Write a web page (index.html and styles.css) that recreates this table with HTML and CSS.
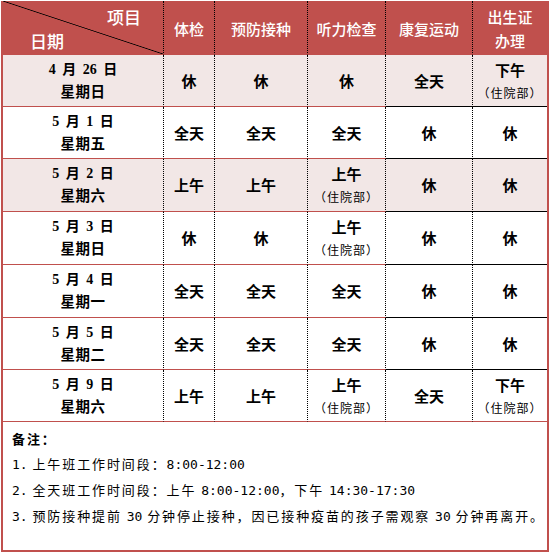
FILE: index.html
```html
<!DOCTYPE html>
<html lang="zh-CN">
<head>
<meta charset="utf-8">
<title>门诊安排</title>
<link rel="stylesheet" href="styles.css">
</head>
<body>
<div class="sheet">
  <div class="grid">
    <div class="cell head corner"><span class="c-top">项目</span><span class="c-bot">日期</span></div>
    <div class="cell head">体检</div>
    <div class="cell head">预防接种</div>
    <div class="cell head">听力检查</div>
    <div class="cell head">康复运动</div>
    <div class="cell head last"><span>出生证</span><span>办理</span></div>

    <div class="cell date pink"><span>4 月 26 日</span><span>星期日</span></div>
    <div class="cell pink">休</div>
    <div class="cell pink">休</div>
    <div class="cell pink">休</div>
    <div class="cell pink dark">全天</div>
    <div class="cell pink dark last"><span>下午</span><span class="sub">（住院部）</span></div>

    <div class="cell date"><span>5 月 1 日</span><span>星期五</span></div>
    <div class="cell">全天</div>
    <div class="cell">全天</div>
    <div class="cell">全天</div>
    <div class="cell dark">休</div>
    <div class="cell dark last">休</div>

    <div class="cell date pink"><span>5 月 2 日</span><span>星期六</span></div>
    <div class="cell pink">上午</div>
    <div class="cell pink">上午</div>
    <div class="cell pink"><span>上午</span><span class="sub">（住院部）</span></div>
    <div class="cell pink dark">休</div>
    <div class="cell pink dark last">休</div>

    <div class="cell date"><span>5 月 3 日</span><span>星期日</span></div>
    <div class="cell">休</div>
    <div class="cell">休</div>
    <div class="cell"><span>上午</span><span class="sub">（住院部）</span></div>
    <div class="cell dark">休</div>
    <div class="cell dark last">休</div>

    <div class="cell date"><span>5 月 4 日</span><span>星期一</span></div>
    <div class="cell">全天</div>
    <div class="cell">全天</div>
    <div class="cell">全天</div>
    <div class="cell dark">休</div>
    <div class="cell dark last">休</div>

    <div class="cell date"><span>5 月 5 日</span><span>星期二</span></div>
    <div class="cell">全天</div>
    <div class="cell">全天</div>
    <div class="cell">全天</div>
    <div class="cell dark">休</div>
    <div class="cell dark last">休</div>

    <div class="cell date"><span>5 月 9 日</span><span>星期六</span></div>
    <div class="cell">上午</div>
    <div class="cell">上午</div>
    <div class="cell"><span>上午</span><span class="sub">（住院部）</span></div>
    <div class="cell">全天</div>
    <div class="cell last"><span>下午</span><span class="sub">（住院部）</span></div>
  </div>
  <div class="notes">
    <p class="title">备注：</p>
    <p><span class="n">1.</span> 上午班工作时间段：<span class="n">8:00-12:00</span></p>
    <p><span class="n">2.</span> 全天班工作时间段：上午 <span class="n">8:00-12:00</span>，下午 <span class="n">14:30-17:30</span></p>
    <p><span class="n">3.</span> 预防接种提前 <span class="n">30</span> 分钟停止接种，因已接种疫苗的孩子需观察 <span class="n">30</span> 分钟再离开。</p>
  </div>
</div>
</body>
</html>
```

FILE: styles.css
```css
* { box-sizing: border-box; }

body {
  margin: 0;
  padding: 1px 0 0 1px;
  background: #ffffff;
  font-family: "Noto Sans CJK SC", sans-serif;
  color: #000;
}

.sheet {
  width: 548px;
  border-left: 2px solid #c0504d;
  border-right: 2px solid #c0504d;
  border-bottom: 2px solid #c0504d;
}

.grid {
  display: grid;
  grid-template-columns: 161px 51px 93px 78px 87px 74px;
  grid-template-rows: 54px 52px 52px 53px 53px 53px 52px 52px;
}

.cell {
  display: flex;
  flex-direction: column;
  align-items: center;
  justify-content: center;
  border-right: 1px dotted #000;
  border-bottom: 1px solid #c0504d;
  font-size: 15px;
  font-weight: 700;
  line-height: 24px;
  background: #ffffff;
  white-space: nowrap;
}

.cell.last { border-right: none; }
.cell.dark { border-bottom-color: #000; }
.cell.pink { background: #f2e7e6; }

.head {
  background: #c0504d;
  color: #ffffff;
  font-weight: 500;
  font-size: 15px;
  padding-top: 3px;
}

.corner {
  position: relative;
  align-items: stretch;
  justify-content: space-between;
  padding: 4px 0 2px 0;
  font-size: 17px;
  background:
    linear-gradient(to top right, transparent calc(50% - 0.8px), #000 50%, transparent calc(50% + 0.8px)),
    #c0504d;
}

.c-top { align-self: flex-end; padding-right: 22px; }
.c-bot { align-self: flex-start; padding-left: 27px; }

.date {
  font-family: "Liberation Serif", "Noto Sans CJK SC", serif;
  font-size: 14px;
  line-height: 23px;
  word-spacing: 3px;
}

.date span + span { font-size: 14.5px; letter-spacing: 0.5px; }

.sub {
  font-size: 12px;
  font-weight: 400;
  line-height: 22px;
  letter-spacing: 1px;
}

.notes {
  height: 128px;
  padding: 4px 0 0 9px;
}

.notes p {
  margin: 0;
  font-size: 13px;
  line-height: 25px;
  letter-spacing: 1.9px;
  white-space: nowrap;
}

.notes .title { font-weight: 700; }

.n {
  font-family: "DejaVu Sans Mono", monospace;
  letter-spacing: 0;
}
```
